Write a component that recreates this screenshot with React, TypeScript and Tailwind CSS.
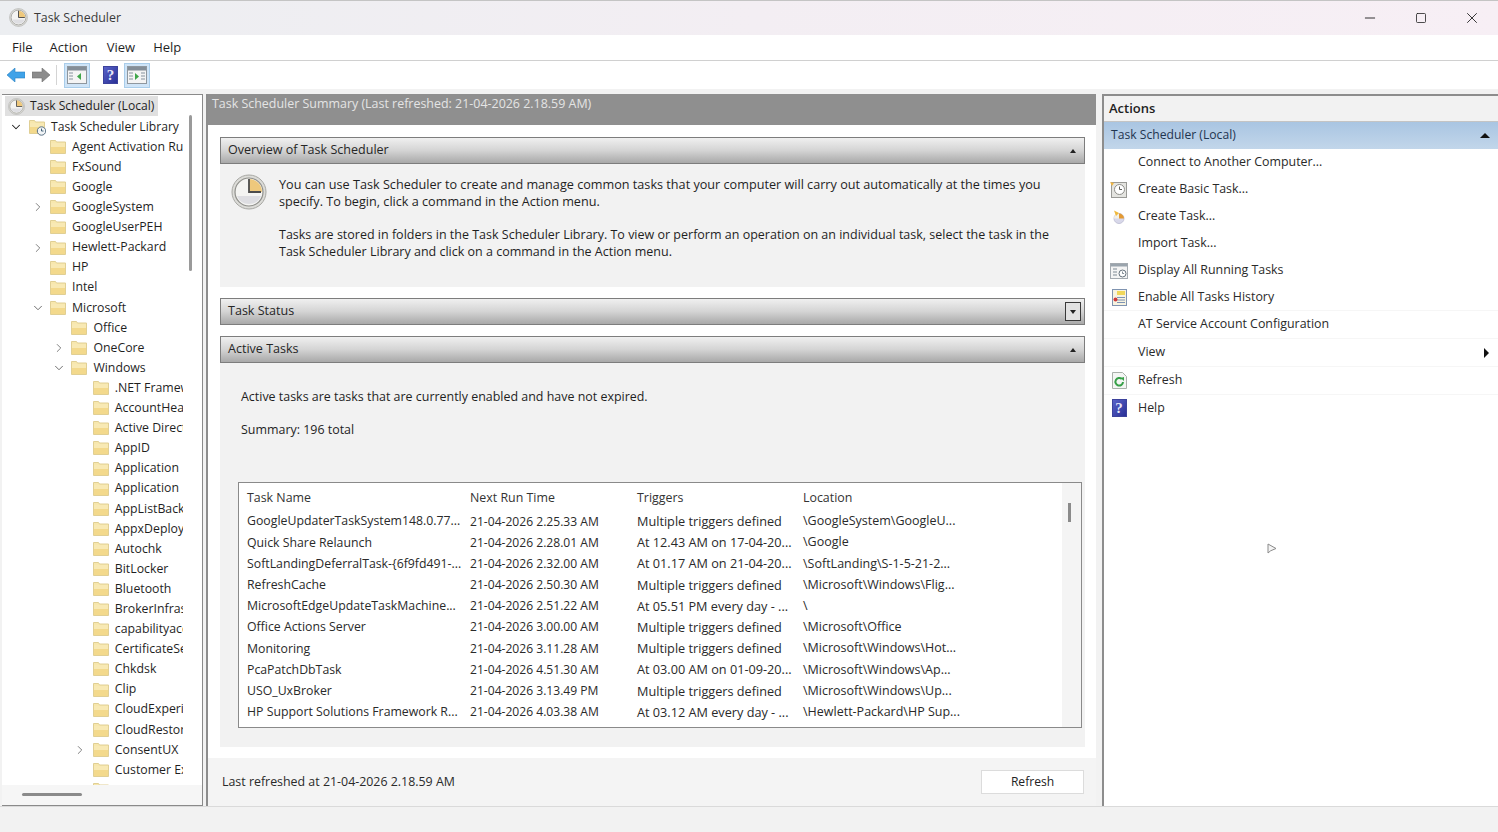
import { ChevronDown, ChevronRight, Minus, Square, X } from "lucide-react"

const font = "font-['Open_Sans','Noto_Sans',sans-serif]"

type TreeRow = { label: string; depth: number; arrow?: "open" | "closed" }

const treeRows: TreeRow[] = [
  { label: "Agent Activation Runtime", depth: 2 },
  { label: "FxSound", depth: 2 },
  { label: "Google", depth: 2 },
  { label: "GoogleSystem", depth: 2, arrow: "closed" },
  { label: "GoogleUserPEH", depth: 2 },
  { label: "Hewlett-Packard", depth: 2, arrow: "closed" },
  { label: "HP", depth: 2 },
  { label: "Intel", depth: 2 },
  { label: "Microsoft", depth: 2, arrow: "open" },
  { label: "Office", depth: 3 },
  { label: "OneCore", depth: 3, arrow: "closed" },
  { label: "Windows", depth: 3, arrow: "open" },
  { label: ".NET Framework", depth: 4 },
  { label: "AccountHealth", depth: 4 },
  { label: "Active Directory", depth: 4 },
  { label: "AppID", depth: 4 },
  { label: "Application", depth: 4 },
  { label: "Application", depth: 4 },
  { label: "AppListBackup", depth: 4 },
  { label: "AppxDeployment", depth: 4 },
  { label: "Autochk", depth: 4 },
  { label: "BitLocker", depth: 4 },
  { label: "Bluetooth", depth: 4 },
  { label: "BrokerInfrastructure", depth: 4 },
  { label: "capabilityaccess", depth: 4 },
  { label: "CertificateServices", depth: 4 },
  { label: "Chkdsk", depth: 4 },
  { label: "Clip", depth: 4 },
  { label: "CloudExperience", depth: 4 },
  { label: "CloudRestore", depth: 4 },
  { label: "ConsentUX", depth: 4, arrow: "closed" },
  { label: "Customer Experience", depth: 4 },
  { label: "Data Integrity", depth: 4 },
]

const tasks = [
  ["GoogleUpdaterTaskSystem148.0.77...", "21-04-2026 2.25.33 AM", "Multiple triggers defined", "\\GoogleSystem\\GoogleU..."],
  ["Quick Share Relaunch", "21-04-2026 2.28.01 AM", "At 12.43 AM on 17-04-20...", "\\Google"],
  ["SoftLandingDeferralTask-{6f9fd491-...", "21-04-2026 2.32.00 AM", "At 01.17 AM on 21-04-20...", "\\SoftLanding\\S-1-5-21-2..."],
  ["RefreshCache", "21-04-2026 2.50.30 AM", "Multiple triggers defined", "\\Microsoft\\Windows\\Flig..."],
  ["MicrosoftEdgeUpdateTaskMachine...", "21-04-2026 2.51.22 AM", "At 05.51 PM every day - ...", "\\"],
  ["Office Actions Server", "21-04-2026 3.00.00 AM", "Multiple triggers defined", "\\Microsoft\\Office"],
  ["Monitoring", "21-04-2026 3.11.28 AM", "Multiple triggers defined", "\\Microsoft\\Windows\\Hot..."],
  ["PcaPatchDbTask", "21-04-2026 4.51.30 AM", "At 03.00 AM on 01-09-20...", "\\Microsoft\\Windows\\Ap..."],
  ["USO_UxBroker", "21-04-2026 3.13.49 PM", "Multiple triggers defined", "\\Microsoft\\Windows\\Up..."],
  ["HP Support Solutions Framework R...", "21-04-2026 4.03.38 AM", "At 03.12 AM every day - ...", "\\Hewlett-Packard\\HP Sup..."],
]

function ClockIcon({ size = 18 }: { size?: number }) {
  return (
    <svg width={size} height={size} viewBox="0 0 36 36" className="shrink-0">
      <circle cx="18" cy="18" r="17" fill="#dcdcd8" stroke="#a8a8a4" strokeWidth="1" />
      <circle cx="18" cy="18" r="14" fill="#f4f4f2" stroke="#8f8f8b" strokeWidth="1.2" />
      <path d="M18 18V5A13 13 0 0 1 31 18Z" fill="#eec87c" />
      <path d="M6 22a13 13 0 0 0 24 0Z" fill="#dedee2" />
      <path d="M18 5v13h12" fill="none" stroke="#4c4c4c" strokeWidth="1.8" />
    </svg>
  )
}

function FolderIcon({ clock }: { clock?: boolean }) {
  return (
    <svg width="18" height="18" viewBox="0 0 18 18" className="shrink-0">
      <path d="M1.5 2.5h5l1 1.5h9v11.5h-15Z" fill="#f7e7ad" stroke="#e0cf94" strokeWidth="1" />
      <rect x="2" y="5" width="14" height="10" fill="#f3d98c" />
      <rect x="2" y="5" width="14" height="4" fill="#f8e9b4" />
      {clock && <circle cx="13.5" cy="13" r="4.2" fill="#f1f4f6" stroke="#5c7386" strokeWidth="1" />}
      {clock && <path d="M13.5 10.6V13h2" fill="none" stroke="#30506a" strokeWidth="0.9" />}
    </svg>
  )
}

function HelpIcon({ size = 15 }: { size?: number }) {
  return (
    <span
      style={{ width: size, height: size + 3 }}
      className="flex items-center justify-center bg-gradient-to-br from-[#5a62c8] to-[#2a2f96] border border-[#3c429c] text-[#e8e8f8] text-[15px] font-bold leading-none font-['Liberation_Serif',serif]"
    >
      ?
    </span>
  )
}

function PanelToggleIcon({ right }: { right?: boolean }) {
  return (
    <span className="w-[26px] h-[25px] bg-[#cfe4f7] border border-[#a9cdea] flex items-center justify-center">
      <svg width="20" height="18" viewBox="0 0 20 18">
        <rect x="0.5" y="0.5" width="19" height="17" fill="#f4f4f4" stroke="#8f979e" />
        <rect x="1" y="1" width="18" height="3.5" fill="#848e98" />
        <path d="M2 7h4M2 10h4M2 13h4" stroke="#aab3ba" strokeWidth="1.5" />
        {right && <path d="M14 7h4M14 10h4M14 13h4" stroke="#aab3ba" strokeWidth="1.5" />}
        <path d={right ? "M8 7l4 3.5-4 3.5Z" : "M14 7l-4 3.5 4 3.5Z"} fill="#3fa64a" />
      </svg>
    </span>
  )
}

function SectionHeader({ title, box }: { title: string; box?: boolean }) {
  return (
    <div className="h-[27px] shrink-0 flex items-center justify-between pl-[7px] pr-[3px] border border-[#7d7d7d] bg-gradient-to-b from-[#f0f0f0] via-[#d4d4d4] to-[#a9a9a9] text-[12.55px] text-[#262626]">
      <span>{title}</span>
      {box ? (
        <span className="w-[16px] h-[19px] border border-[#3a3a3a] bg-[#e2e2e2] flex items-center justify-center">
          <span className="border-x-[3px] border-x-transparent border-t-[4px] border-t-[#222]" />
        </span>
      ) : (
        <span className="w-[16px] flex items-center justify-center">
          <span className="border-x-[3px] border-x-transparent border-b-[4px] border-b-[#222]" />
        </span>
      )}
    </div>
  )
}

function ActionIcon({ kind }: { kind: string }) {
  if (kind === "basic")
    return (
      <svg width="18" height="18" viewBox="0 0 18 18">
        <rect x="1.5" y="1.5" width="15" height="15" fill="#e4e4e0" stroke="#9a9a96" />
        <circle cx="9.5" cy="8.5" r="5" fill="#fff" stroke="#8f8f8b" />
        <path d="M9.5 5.5v3h2.5" fill="none" stroke="#5c5c58" />
        <path d="M0 1l4 1-2 3Z" fill="#f2b640" />
      </svg>
    )
  if (kind === "create")
    return (
      <svg width="16" height="16" viewBox="0 0 16 16">
        <circle cx="8" cy="9.5" r="5" fill="#d8d8ea" stroke="#c4c4d8" />
        <path d="M8 9.5V4.5A5 5 0 0 1 13 9.5Z" fill="#e49a32" />
        <path d="M8 9.5H3A5 5 0 0 1 8 4.5Z" fill="#f4f0e4" />
        <path d="M3 1.5l5 2.5L5 7Z" fill="#f0b93c" />
      </svg>
    )
  if (kind === "display")
    return (
      <svg width="18" height="16" viewBox="0 0 18 16">
        <rect x="0.5" y="0.5" width="17" height="15" fill="#f4f4f4" stroke="#a4aab0" />
        <rect x="1" y="1" width="16" height="2.5" fill="#9aa4ad" />
        <path d="M3 6h4M3 9h4M3 12h4" stroke="#a5adb4" strokeWidth="1.4" />
        <circle cx="12.5" cy="10.5" r="3.5" fill="#fff" stroke="#66727c" />
        <path d="M12.5 8.5v2h1.6" fill="none" stroke="#66727c" strokeWidth="0.8" />
      </svg>
    )
  if (kind === "history")
    return (
      <svg width="15" height="17" viewBox="0 0 15 17">
        <rect x="0.5" y="0.5" width="14" height="16" fill="#f7f3e0" stroke="#7f93b0" />
        <rect x="5" y="2" width="8" height="4" fill="#f0d75a" />
        <path d="M5 8.5h8M5 11h8M5 13.5h8" stroke="#7d93b4" />
        <circle cx="3.5" cy="10.5" r="2" fill="#cf3a3a" />
      </svg>
    )
  if (kind === "refresh")
    return (
      <svg width="15" height="17" viewBox="0 0 15 17">
        <path d="M0.5 0.5h10l4 4v12h-14Z" fill="#f4f6f4" stroke="#a9b0aa" />
        <path d="M11 10a3.8 3.8 0 1 1-1.2-3" fill="none" stroke="#37a048" strokeWidth="2" />
        <path d="M8.5 6l3.5-1v4Z" fill="#37a048" />
      </svg>
    )
  if (kind === "help") return <HelpIcon size={15} />
  return null
}

const actions = [
  { label: "Connect to Another Computer...", icon: "", h: "h-[27px]" },
  { label: "Create Basic Task...", icon: "basic", h: "h-[27px]" },
  { label: "Create Task...", icon: "create", h: "h-[27px]" },
  { label: "Import Task...", icon: "", h: "h-[27px]" },
  { label: "Display All Running Tasks", icon: "display", h: "h-[27px]" },
  { label: "Enable All Tasks History", icon: "history", h: "h-[27px] border-b border-[#f6f6f6]" },
  { label: "AT Service Account Configuration", icon: "", h: "h-[28px] border-b border-[#f6f6f6]" },
  { label: "View", icon: "", h: "h-[28px] border-b border-[#f6f6f6]", more: true },
  { label: "Refresh", icon: "refresh", h: "h-[28px] border-b border-[#f6f6f6]" },
  { label: "Help", icon: "help", h: "h-[26px]" },
]

export default function App() {
  return (
    <div className={`${font} w-[1498px] h-[832px] flex flex-col overflow-hidden bg-[#f2f2f2] text-[#1f1f1f] text-[12.3px]`}>
      <div className="h-[35px] shrink-0 flex items-center justify-between pl-[9px] bg-gradient-to-r from-[#eceef1] via-[#f3eef3] to-[#f7eff5] border-t border-[#c4c4c4]">
        <div className="flex items-center gap-[6px]">
          <ClockIcon size={19} />
          <span className="text-[12.4px] text-[#3a3a3a] pt-px">Task Scheduler</span>
        </div>
        <div className="flex items-center text-[#222] pb-px">
          <span className="w-[51px] flex justify-center"><Minus size={16} strokeWidth={1.4} /></span>
          <span className="w-[51px] flex justify-center"><Square size={12} strokeWidth={1.6} /></span>
          <span className="w-[52px] flex justify-center"><X size={18} strokeWidth={1.2} /></span>
        </div>
      </div>

      <div className="h-[25px] shrink-0 bg-white flex items-center pl-[12px] text-[13px]">
        <span>File</span>
        <span className="ml-[17px]">Action</span>
        <span className="ml-[19px]">View</span>
        <span className="ml-[18px]">Help</span>
      </div>

      <div className="h-[29px] shrink-0 bg-white border-t border-[#d0d0d0] flex items-center pl-[7px]">
        <svg width="18" height="14" viewBox="0 0 18 14"><path d="M0 7l8-7v4h10v6H8v4Z" fill="#3fa2e8" stroke="#2a7fc0" strokeWidth="0.6" /></svg>
        <svg width="18" height="14" viewBox="0 0 18 14" className="ml-[7px]"><path d="M18 7l-8-7v4H0v6h10v4Z" fill="#8c8c8c" stroke="#6e6e6e" strokeWidth="0.6" /></svg>
        <span className="w-px h-[20px] bg-[#d4d4d4] ml-[6px]" />
        <span className="ml-[7px]"><PanelToggleIcon /></span>
        <span className="ml-[13px]"><HelpIcon size={15} /></span>
        <span className="ml-[6px]"><PanelToggleIcon right /></span>
      </div>

      <div className="h-[5px] shrink-0 bg-[#f2f2f2]" />

      <div className="h-[712px] shrink-0 flex">
        <div className="w-[201px] ml-[2px] shrink-0 bg-white border-t border-r border-b border-[#8a8a8a] relative overflow-hidden">
          <div className="w-[181px] overflow-hidden pl-[3px] pt-px">
            <div className="h-[20px] flex items-center gap-[5px] pl-[3px] w-[153px] bg-[#e0e0e0] whitespace-nowrap text-[12.1px]">
              <ClockIcon size={17} />
              <span>Task Scheduler (Local)</span>
            </div>
            <div className="h-[21px] flex items-center whitespace-nowrap">
              <span className="w-[23px] shrink-0 flex justify-center pr-[2px]"><ChevronDown size={14} strokeWidth={1.8} /></span>
              <FolderIcon clock />
              <span className="ml-[5px] pt-px text-[12.15px]">Task Scheduler Library</span>
            </div>
            {treeRows.map((r, i) => (
              <div key={i} className="h-[20.1px] flex items-center whitespace-nowrap" style={{ paddingLeft: (r.depth - 2) * 21.4 + 21 }}>
                <span className="w-[23px] shrink-0 flex justify-center text-[#666]">
                  {r.arrow === "open" && <ChevronDown size={14} strokeWidth={1.6} />}
                  {r.arrow === "closed" && <ChevronRight size={14} strokeWidth={1.4} />}
                </span>
                <FolderIcon />
                <span className="ml-[5px]">{r.label}</span>
              </div>
            ))}
          </div>
          <span className="absolute right-[10px] top-[20px] w-[3px] h-[156px] bg-[#9a9a9a] rounded-full" />
          <div className="absolute left-0 right-0 bottom-0 h-[20px] bg-[#f6f6f6]">
            <span className="absolute left-[20px] top-[8px] w-[60px] h-[3px] bg-[#8b8b8b] rounded-full" />
          </div>
        </div>

        <div className="w-[890px] ml-[3px] shrink-0 flex flex-col border-l-2 border-[#8d8d8d] bg-white">
          <div className="h-[31px] shrink-0 bg-[#8f8f8f] px-[4px] pt-px text-[#e4e4e4] text-[12.45px] leading-[18px]">
            Task Scheduler Summary (Last refreshed: 21-04-2026 2.18.59 AM)
          </div>
          <div className="flex-1 min-h-0 flex flex-col pl-[12px] pr-[11px] pt-[12px]">
            <SectionHeader title="Overview of Task Scheduler" />
            <div className="h-[123px] shrink-0 bg-[#f2f2f2] flex gap-[12px] pl-[11px] pr-[10px] pt-[12px] leading-[17px]">
              <span className="shrink-0 -mt-[2px]"><ClockIcon size={36} /></span>
              <div>
                <p className="text-[12.65px]">You can use Task Scheduler to create and manage common tasks that your computer will carry out automatically at the times you specify. To begin, click a command in the Action menu.</p>
                <p className="mt-[16px] text-[12.5px]">Tasks are stored in folders in the Task Scheduler Library. To view or perform an operation on an individual task, select the task in the Task Scheduler Library and click on a command in the Action menu.</p>
              </div>
            </div>
            <div className="h-[11px] shrink-0" />
            <SectionHeader title="Task Status" box />
            <div className="h-[11px] shrink-0" />
            <SectionHeader title="Active Tasks" />
            <div className="h-[384px] shrink-0 bg-[#f2f2f2] pl-[18px] pr-[3px] flex flex-col text-[12.45px]">
              <p className="pl-[3px] pt-[25px] leading-[18px]">Active tasks are tasks that are currently enabled and have not expired.</p>
              <p className="pl-[3px] mt-[15px] leading-[18px]">Summary: 196 total</p>
              <div className="mt-[43px] h-[246px] w-[844px] bg-white border border-[#8a8a8a] flex">
                <div className="flex-1 pl-[8px] min-w-0">
                  <div className="h-[28px] pt-[3px] flex items-center text-[#333] text-[12.4px]">
                    <span className="w-[223px]">Task Name</span>
                    <span className="w-[167px]">Next Run Time</span>
                    <span className="w-[166px]">Triggers</span>
                    <span>Location</span>
                  </div>
                  {tasks.map((t) => (
                    <div key={t[0]} className="h-[21.2px] flex items-center whitespace-nowrap text-[#2a2a2a]">
                      <span className="w-[223px] shrink-0 text-[12.3px]">{t[0]}</span>
                      <span className="w-[167px] shrink-0 text-[12.1px]">{t[1]}</span>
                      <span className="w-[166px] shrink-0 text-[12.7px]">{t[2]}</span>
                      <span className="text-[12.5px]">{t[3]}</span>
                    </div>
                  ))}
                </div>
                <div className="w-[19px] shrink-0 bg-[#f4f4f4] relative">
                  <span className="absolute left-[6px] top-[20px] w-[3px] h-[19px] bg-[#8b8b8b]" />
                </div>
              </div>
            </div>
            <div className="h-[11px] shrink-0" />
            <div className="flex-1 min-h-0 -mx-[12px] -mr-[11px] pl-[14px] pr-[12px] bg-[#f4f4f4] flex items-center justify-between text-[12.4px]">
              <span className="text-[#2a2a2a]">Last refreshed at 21-04-2026 2.18.59 AM</span>
              <span className="w-[103px] h-[24px] bg-white border border-[#dcdcdc] flex items-center justify-center text-[#222] text-[12.1px]">Refresh</span>
            </div>
          </div>
        </div>

        <div className="w-[396px] ml-[6px] shrink-0 bg-white border-l-2 border-t-2 border-[#8d8d8d] flex flex-col text-[12.4px] relative">
          <div className="h-[26px] shrink-0 bg-[#f2f2f2] flex items-center pl-[5px] font-semibold text-[13px] border-b border-[#c4c4c4]">Actions</div>
          <div className="h-[27px] shrink-0 flex items-center justify-between pl-[7px] pr-[8px] bg-gradient-to-b from-[#a9c5e2] to-[#c2d6ea] text-[#1f3550] text-[12.15px]">
            <span>Task Scheduler (Local)</span>
            <span className="border-x-[5px] border-x-transparent border-b-[5px] border-b-[#111]" />
          </div>
          {actions.map((a) => (
            <div key={a.label} className={`${a.h} shrink-0 flex items-center pr-[9px] text-[#2a2a2a]`}>
              <span className="w-[34px] shrink-0 flex justify-center pr-[4px]"><ActionIcon kind={a.icon} /></span>
              <span className="flex-1">{a.label}</span>
              {a.more && <span className="border-y-[5px] border-y-transparent border-l-[5px] border-l-[#111]" />}
            </div>
          ))}
          {/* mouse pointer */}
          <svg width="10" height="11" viewBox="0 0 10 11" className="absolute left-[163px] top-[447px]">
            <path d="M1 1v9l2.6-2.2L9 5.5Z" fill="#f4f4f4" stroke="#8a8a8a" strokeWidth="1" />
          </svg>
        </div>
      </div>

      <div className="flex-1 bg-[#f2f2f2] border-t border-[#dadada]" />
    </div>
  )
}
